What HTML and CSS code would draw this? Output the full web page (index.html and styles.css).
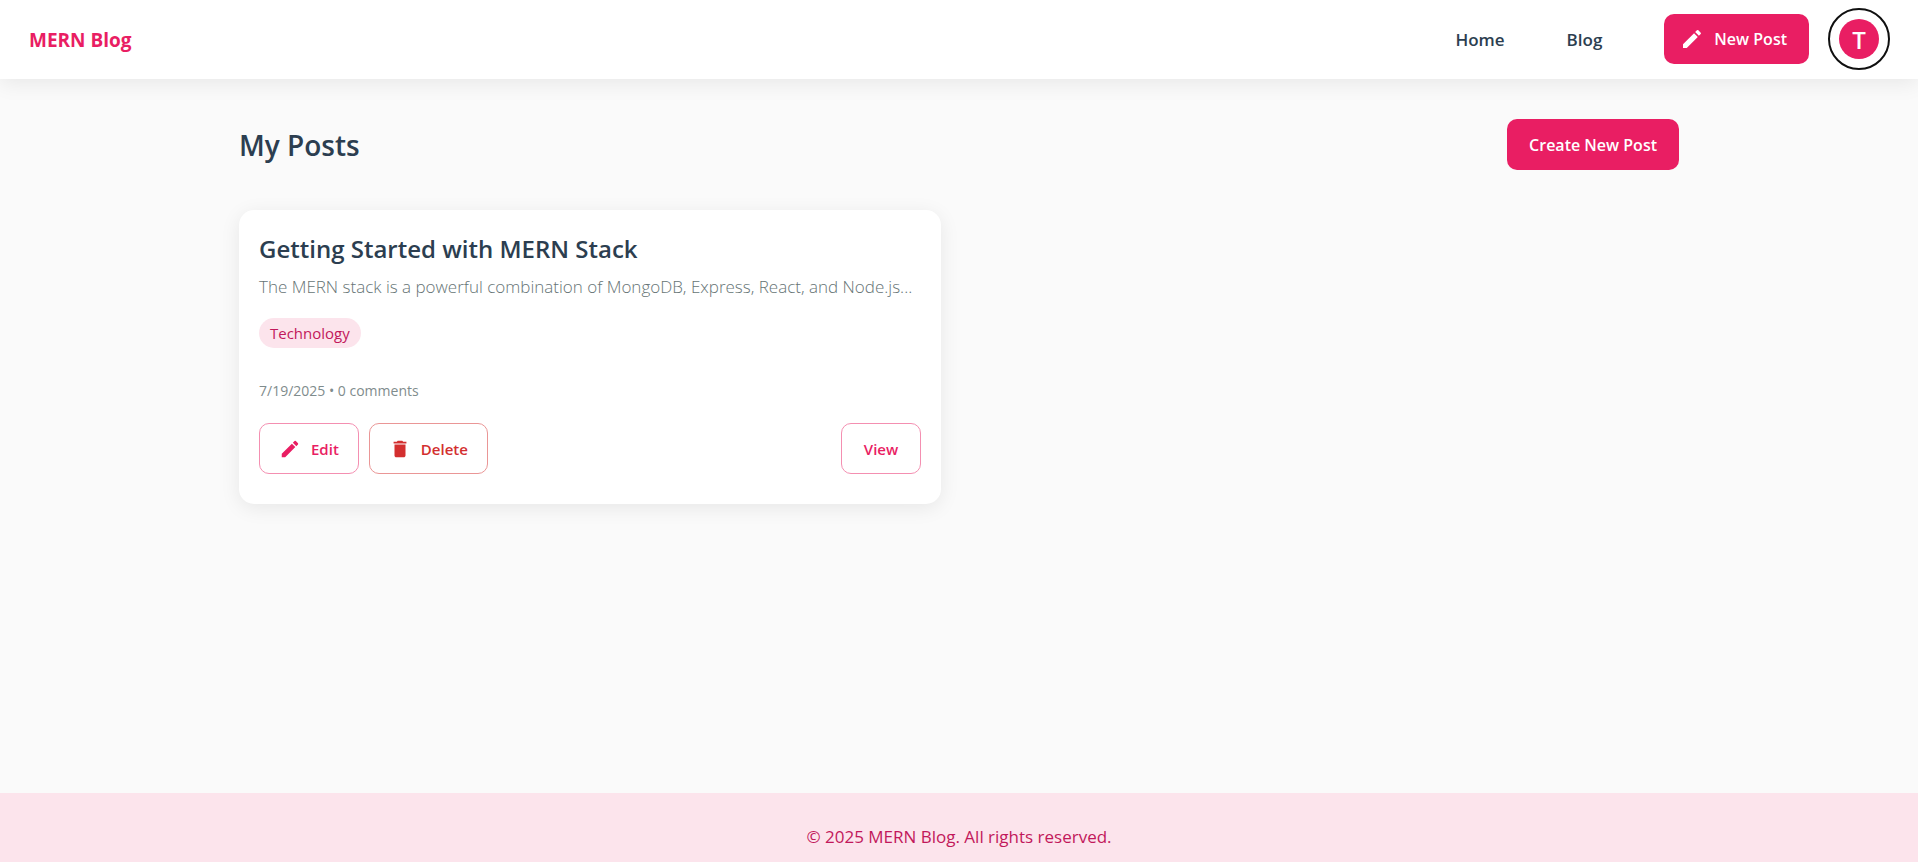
FILE: index.html
```html
<!DOCTYPE html>
<html lang="en">
<head>
<meta charset="utf-8">
<meta name="viewport" content="width=device-width, initial-scale=1">
<title>MERN Blog</title>
<link rel="stylesheet" href="styles.css">
</head>
<body>
<div class="page">
  <header class="topbar">
    <a class="brand" href="#">MERN Blog</a>
    <nav class="nav">
      <a class="nav-link" href="#">Home</a>
      <a class="nav-link" href="#">Blog</a>
      <button class="btn btn-filled btn-new" type="button">
        <svg class="icon" viewBox="0 0 24 24" aria-hidden="true"><path d="M3 17.250V21h3.750L17.810 9.940l-3.750-3.750L3 17.250zM20.710 7.040c.39-.39.39-1.020 0-1.410l-2.340-2.340a.996.996 0 0 0-1.410 0l-1.830 1.830 3.750 3.750 1.830-1.830z"/></svg>
        New Post
      </button>
      <button class="account" type="button" aria-label="Account"><span class="avatar">T</span></button>
    </nav>
  </header>

  <main class="content">
    <div class="heading">
      <h1 class="title">My Posts</h1>
      <button class="btn btn-filled" type="button">Create New Post</button>
    </div>
    <div class="grid">
      <article class="card">
        <h2 class="card-title">Getting Started with MERN Stack</h2>
        <p class="excerpt">The MERN stack is a powerful combination of MongoDB, Express, React, and Node.js...</p>
        <div class="tags"><span class="chip">Technology</span></div>
        <p class="meta">7/19/2025 • 0 comments</p>
        <div class="actions">
          <button class="btn btn-outlined" type="button">
            <svg class="icon" viewBox="0 0 24 24" aria-hidden="true"><path d="M3 17.250V21h3.750L17.810 9.940l-3.750-3.750L3 17.250zM20.710 7.040c.39-.39.39-1.020 0-1.410l-2.340-2.340a.996.996 0 0 0-1.410 0l-1.830 1.830 3.750 3.750 1.830-1.830z"/></svg>
            Edit
          </button>
          <button class="btn btn-outlined btn-danger" type="button">
            <svg class="icon" viewBox="0 0 24 24" aria-hidden="true"><path d="M6 19c0 1.100.9 2 2 2h8c1.100 0 2-.9 2-2V7H6v12zM19 4h-3.500l-1-1h-5l-1 1H5v2h14V4z"/></svg>
            Delete
          </button>
          <button class="btn btn-outlined btn-view" type="button">View</button>
        </div>
      </article>
    </div>
  </main>

  <footer class="footer">© 2025 MERN Blog. All rights reserved.</footer>
</div>
</body>
</html>
```
FILE: styles.css
```css
* {
  box-sizing: border-box;
}

body {
  margin: 0;
  background: #fafafa;
  color: #2c3e50;
  font-family: "Segoe UI", "Open Sans", "Noto Sans", sans-serif;
  font-size: 17px;
  line-height: 24px;
}

.page {
  display: flex;
  flex-direction: column;
  min-height: 100vh;
}

.topbar {
  display: flex;
  align-items: center;
  justify-content: space-between;
  padding: 8px 28px 9px 29px;
  background: #fff;
  box-shadow: 0 4px 20px rgba(0, 0, 0, 0.08);
}

.brand {
  padding-top: 2px;
  color: #e91e63;
  font-size: 19px;
  font-weight: 700;
  text-decoration: none;
}

.nav {
  display: flex;
  align-items: center;
}

.nav-link {
  padding-top: 2px;
  margin-right: 62px;
  color: #2c3e50;
  font-weight: 600;
  text-decoration: none;
}

.btn {
  display: inline-flex;
  align-items: center;
  justify-content: center;
  gap: 10px;
  min-height: 51px;
  padding: 0 22px;
  border: 0;
  border-radius: 10px;
  font: inherit;
  font-size: 16px;
  font-weight: 600;
  cursor: pointer;
}

.btn-filled {
  background: #e91e63;
  color: #fff;
}

.btn-new {
  min-height: 50px;
  padding: 0 22px 0 16px;
  margin-right: 19px;
}

.icon {
  width: 24px;
  height: 24px;
  fill: currentColor;
}

.account {
  display: grid;
  place-items: center;
  width: 62px;
  height: 62px;
  padding: 0;
  border: 2px solid #101010;
  border-radius: 50%;
  background: transparent;
  font: inherit;
  cursor: pointer;
}

.avatar {
  width: 40px;
  height: 40px;
  border-radius: 50%;
  background: #e91e63;
  color: #fff;
  font-size: 24px;
  font-weight: 600;
  line-height: 41px;
  text-align: center;
}

.content {
  flex: 1;
  width: 100%;
  max-width: 1440px;
  margin: 0 auto;
  padding: 40px 0;
}

.heading {
  display: flex;
  align-items: center;
  justify-content: space-between;
  margin-bottom: 40px;
}

.title {
  margin: 0;
  font-size: 28px;
  font-weight: 600;
  line-height: 36px;
}

.grid {
  display: grid;
  grid-template-columns: repeat(2, minmax(0, 1fr));
  gap: 36px;
}

.card {
  padding: 20px 20px 30px;
  border-radius: 15px;
  background: #fff;
  box-shadow: 0 4px 20px rgba(0, 0, 0, 0.08);
}

.card-title {
  margin: 0 0 8px;
  font-size: 24px;
  font-weight: 600;
  line-height: 38px;
}

.excerpt {
  margin: 0 0 20px;
  color: #667475;
  font-weight: 300;
  line-height: 22px;
  white-space: nowrap;
}

.tags {
  display: flex;
}

.chip {
  padding: 0 11px;
  border-radius: 15px;
  background: #fce4ec;
  color: #c2185b;
  font-size: 15px;
  line-height: 30px;
}

.meta {
  margin: 30px 0 20px;
  color: #7f8c8d;
  font-size: 14px;
  line-height: 25px;
}

.actions {
  display: flex;
  gap: 10px;
}

.btn-outlined {
  padding: 0 19px;
  border: 1px solid #f48fb1;
  background: transparent;
  color: #e91e63;
  font-size: 15px;
}

.btn-outlined .icon {
  width: 22px;
  height: 22px;
}

.btn-danger {
  border-color: #ea9696;
  color: #d32f2f;
}

.btn-view {
  min-width: 80px;
  margin-left: auto;
}

.footer {
  padding: 32px 20px 13px;
  background: #fce4ec;
  color: #c2185b;
  text-align: center;
}
```
